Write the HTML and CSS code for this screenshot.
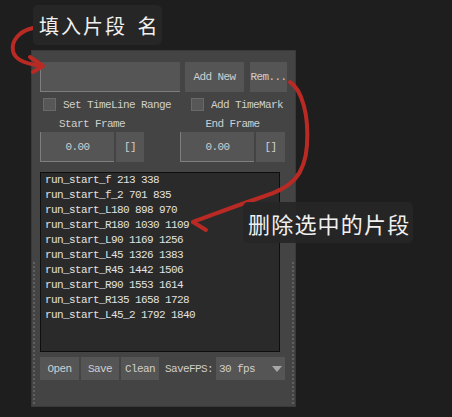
FILE: index.html
```html
<!DOCTYPE html>
<html lang="zh">
<head>
    <meta charset="UTF-8"/>
    <title>Clip Panel</title>
    <link rel="stylesheet" href="styles.css">
</head>
<body>
<div class="stage">
    <div class="panel">
        <div class="row row-name">
            <div class="field field-name"></div>
            <div class="btn btn-add">Add New</div>
            <div class="btn btn-rem">Rem...</div>
        </div>

        <div class="row row-check">
            <div class="check check-range"><span class="box"></span>Set TimeLine Range</div>
            <div class="check"><span class="box"></span>Add TimeMark</div>
        </div>

        <div class="row row-frames">
            <div class="frame frame-start">
                <div class="frame-label">Start Frame</div>
                <div class="frame-inputs">
                    <div class="field field-num">0.00</div>
                    <div class="btn btn-set">[]</div>
                </div>
            </div>
            <div class="frame frame-end">
                <div class="frame-label">End Frame</div>
                <div class="frame-inputs">
                    <div class="field field-num">0.00</div>
                    <div class="btn btn-set">[]</div>
                </div>
            </div>
        </div>

        <div class="clip-list">
            <div>run_start_f 213 338</div>
            <div>run_start_f_2 701 835</div>
            <div>run_start_L180 898 970</div>
            <div>run_start_R180 1030 1109</div>
            <div>run_start_L90 1169 1256</div>
            <div>run_start_L45 1326 1383</div>
            <div>run_start_R45 1442 1506</div>
            <div>run_start_R90 1553 1614</div>
            <div>run_start_R135 1658 1728</div>
            <div>run_start_L45_2 1792 1840</div>
        </div>

        <div class="row row-bottom">
            <div class="btn btn-open">Open</div>
            <div class="btn btn-save">Save</div>
            <div class="btn btn-clean">Clean</div>
            <div class="fps-label">SaveFPS:</div>
            <div class="select">30 fps<span class="caret"></span></div>
        </div>
    </div>

    <svg class="arrows" width="452" height="417" viewBox="0 0 452 417">
        <path d="M33 28 C 20 31, 11 40, 13 51 C 15 61, 28 64, 42 66"/>
        <path d="M30 57 L43 66 L33 72"/>
        <path d="M290 82 C 302 90, 309 115, 307 145 C 305 175, 292 188, 262 197 C 238 205, 215 214, 193 222"/>
        <path d="M193 222 L206 230"/>
    </svg>

    <div class="tag tag-name">填入片段 名</div>
    <div class="tag tag-remove">删除选中的片段</div>
</div>
</body>
</html>
```

FILE: styles.css
```css
body {
    margin: 0;
    background-color: #1e1e1e;
    font-family: "Liberation Mono", "DejaVu Sans Mono", monospace;
    font-size: 11px;
    letter-spacing: -0.6px;
    color: #cfcfcf;
}

.stage {
    position: relative;
    width: 452px;
    height: 417px;
    overflow: hidden;
    padding: 50px 0 0 31px;
    box-sizing: border-box;
}

/* main panel, with the dotted resize grips on both edges */
.panel {
    width: 265px;
    height: 357px;
    box-sizing: border-box;
    padding: 11px 0 0 8px;
    border: 1px solid #3a3a3a;
    background:
        repeating-linear-gradient(to bottom, #606060 0 2px, transparent 2px 4px) left 1px top 211px / 2px 142px no-repeat,
        repeating-linear-gradient(to bottom, #606060 0 2px, transparent 2px 4px) right 1px top 211px / 2px 142px no-repeat,
        #444444;
}

.row {
    display: flex;
    align-items: center;
}

.btn {
    display: flex;
    align-items: center;
    justify-content: center;
    background-color: #555555;
    color: #cfcfcf;
    height: 100%;
}

.field {
    box-sizing: border-box;
    background-color: #555555;
    border-left: 1px solid #7e7e7e;
    border-bottom: 1px solid #7e7e7e;
    height: 100%;
}

.row-name {
    height: 30px;
}
.field-name {
    width: 140px;
}
.btn-add {
    width: 59px;
    margin-left: 5px;
}
.btn-rem {
    width: 37px;
    margin-left: 6px;
}

.row-check {
    margin-top: 6px;
    height: 13px;
}
.check {
    display: flex;
    align-items: center;
    padding-left: 3px;
}
.check-range {
    width: 145px;
}
.box {
    width: 13px;
    height: 13px;
    box-sizing: border-box;
    background-color: #575757;
    border: 1px solid #696969;
    margin-right: 7px;
}

.row-frames {
    margin-top: 7px;
    align-items: flex-start;
}
.frame {
    width: 104px;
}
.frame-end {
    width: 105px;
    margin-left: 36px;
}
.frame-label {
    height: 12px;
    line-height: 12px;
    text-align: center;
}
.frame-inputs {
    display: flex;
    height: 30px;
    margin-top: 2px;
}
.field-num {
    width: 74px;
    display: flex;
    align-items: center;
    justify-content: center;
}
.btn-set {
    width: 28px;
    margin-left: 2px;
}
.frame-end .btn-set {
    width: 29px;
}

.clip-list {
    margin-top: 10px;
    width: 240px;
    height: 180px;
    box-sizing: border-box;
    border: 1px solid #0e0e0e;
    background-color: #2a2a2a;
    color: #e2e2e2;
    padding: 0 4px;
    line-height: 15px;
}

.row-bottom {
    margin-top: 5px;
    height: 23px;
}
.btn-open {
    width: 39px;
}
.btn-save,
.btn-clean {
    width: 38px;
    margin-left: 2px;
}
.fps-label {
    margin-left: 6px;
}
.select {
    display: flex;
    align-items: center;
    width: 69px;
    height: 100%;
    margin-left: 3px;
    padding-left: 3px;
    box-sizing: border-box;
    background-color: #555555;
}
.caret {
    margin-left: auto;
    margin-right: 3px;
    width: 0;
    height: 0;
    border-left: 5px solid transparent;
    border-right: 5px solid transparent;
    border-top: 6px solid #a8a8a8;
}

/* annotations drawn over the screenshot */
.arrows {
    position: absolute;
    left: 0;
    top: 0;
    fill: none;
    stroke: #b92a24;
    stroke-width: 4;
    stroke-linecap: round;
    stroke-linejoin: round;
}

.tag {
    position: absolute;
    display: flex;
    align-items: center;
    box-sizing: border-box;
    border-radius: 5px;
    color: #f0f0f0;
    font-family: "Noto Sans CJK SC", "Noto Sans", sans-serif;
}
.tag-name {
    left: 33px;
    top: 5px;
    width: 129px;
    height: 40px;
    padding-left: 6px;
    font-size: 20px;
    letter-spacing: 2px;
    word-spacing: 4px;
    background-color: #262626;
}
.tag-remove {
    left: 243px;
    top: 202px;
    width: 170px;
    height: 41px;
    padding-left: 5px;
    font-size: 22px;
    letter-spacing: 1.2px;
    background-color: rgba(38, 38, 38, 0.92);
}
```
